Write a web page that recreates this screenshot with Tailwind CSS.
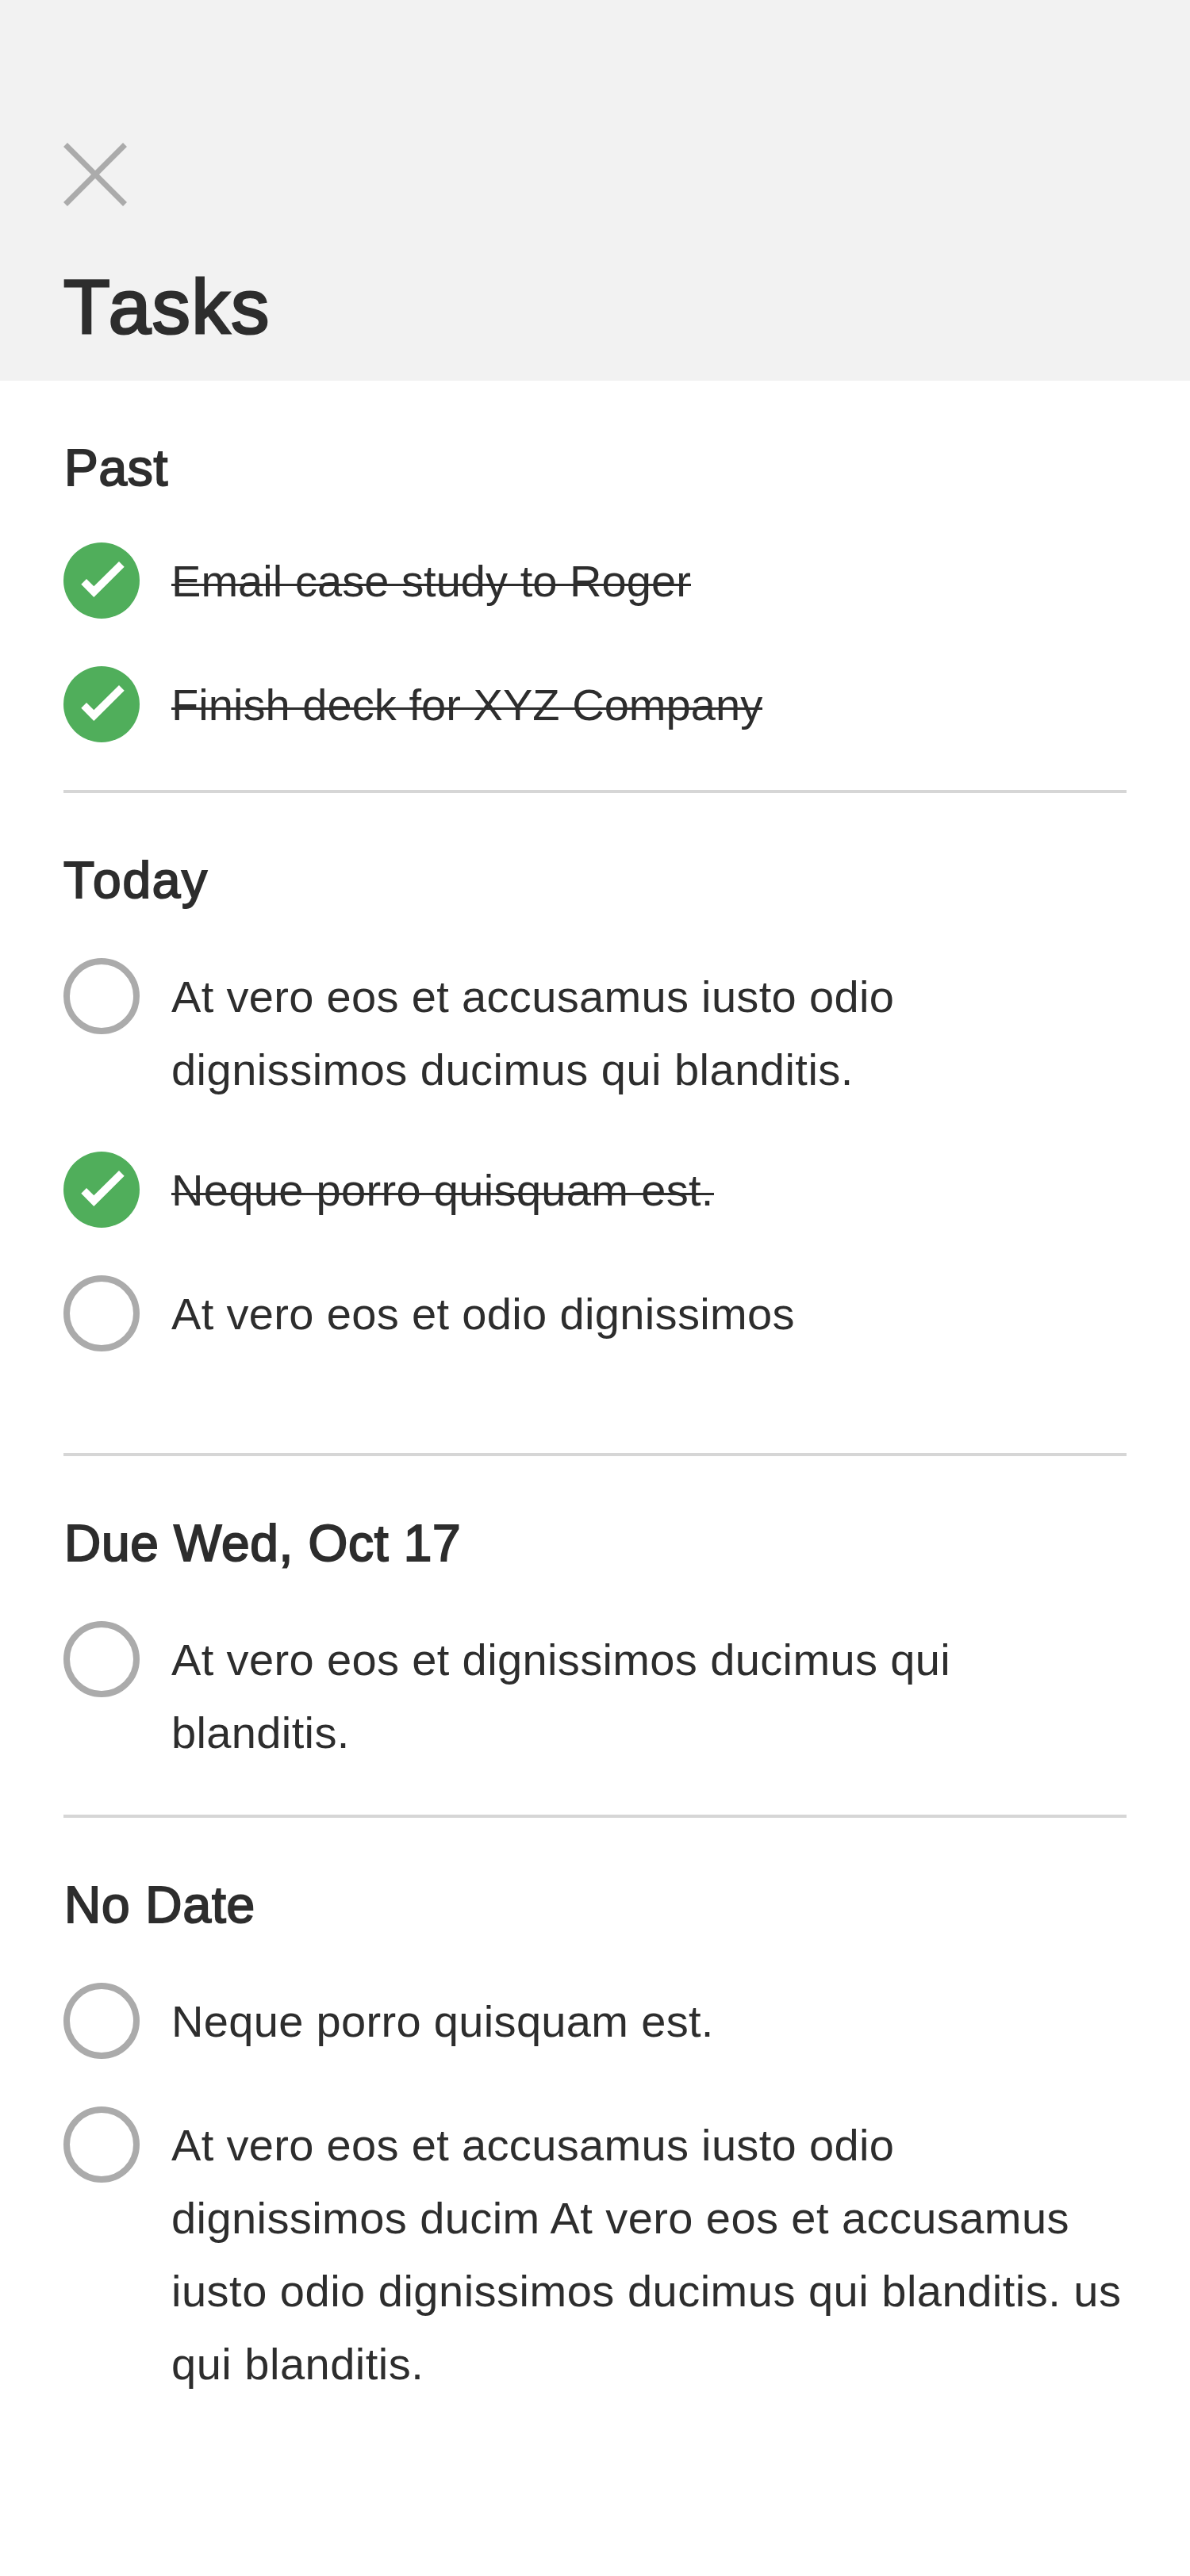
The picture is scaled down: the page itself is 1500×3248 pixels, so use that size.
<!DOCTYPE html>
<html lang="en">
<head>
<meta charset="utf-8">
<title>Tasks</title>
<script src="https://cdn.jsdelivr.net/npm/@tailwindcss/browser@4"></script>
</head>
<body class="bg-white font-['Liberation_Sans',Arial,sans-serif] text-[56px] leading-[92px] text-[#2d2d2d]">
<svg class="hidden">
  <symbol id="done" viewBox="0 0 96 96">
    <circle cx="48" cy="48" r="48" fill="#50ae5b"/>
    <path d="M22.3 52.7 29 46l9.3 9.3L70 24l6.7 6.7L38.3 69z" fill="#fff"/>
  </symbol>
  <symbol id="open" viewBox="0 0 96 96">
    <circle cx="48" cy="48" r="44" fill="none" stroke="#ababab" stroke-width="8"/>
  </symbol>
</svg>

<header class="h-[480px] bg-[#f2f2f2] px-20 pt-[180px]">
  <button class="block size-20" aria-label="Close">
    <svg class="size-20" viewBox="0 0 80 80" fill="none" stroke="#ababab" stroke-width="7"><path d="M2.5 2.5l75 75M77.5 2.5l-75 75"/></svg>
  </button>
  <h1 class="mt-[67px] text-[96px] leading-[120px] tracking-[1.7px] [-webkit-text-stroke:3px_#2d2d2d]"><span class="tracking-[-2px]">T</span>asks</h1>
</header>

<main class="px-20 pb-50">
  <section class="border-b-4 border-[#d6d6d6] pt-[70px] pb-[60px]">
    <h2 class="mb-[54px] pl-px text-[64px] leading-20 tracking-[0.7px] [-webkit-text-stroke:2px_#2d2d2d]">Past</h2>
    <ul class="flex flex-col gap-[60px]">
      <li class="flex min-h-24 gap-10">
        <svg class="size-24 shrink-0"><use href="#done"/></svg>
        <p class="relative mt-[3px] -mb-[3px] tracking-[0.05px] after:absolute after:inset-x-0 after:top-[49px] after:h-[3px] after:bg-[#2d2d2d]">Email case study to Roger</p>
      </li>
      <li class="flex min-h-24 gap-10">
        <svg class="size-24 shrink-0"><use href="#done"/></svg>
        <p class="relative mt-[3px] -mb-[3px] tracking-[0.05px] after:absolute after:inset-x-0 after:top-[49px] after:h-[3px] after:bg-[#2d2d2d]">Finish deck for XYZ Company</p>
      </li>
    </ul>
  </section>

  <section class="border-b-4 border-[#d6d6d6] pt-[70px] pb-[128px]">
    <h2 class="mb-[58px] text-[64px] leading-20 tracking-[1.7px] [-webkit-text-stroke:2px_#2d2d2d]"><span class="tracking-[-2px]">T</span>oday</h2>
    <ul class="flex flex-col gap-[60px]">
      <li class="flex min-h-24 gap-10">
        <svg class="size-24 shrink-0"><use href="#open"/></svg>
        <p class="mt-[3px] -mb-[3px] tracking-[0.33px]">At vero eos et accusamus iusto odio<br><span class="tracking-[0.48px]">dignissimos ducimus qui blanditis.</span></p>
      </li>
      <li class="flex min-h-24 gap-10">
        <svg class="size-24 shrink-0"><use href="#done"/></svg>
        <p class="relative mt-[3px] -mb-[3px] tracking-[0.33px] after:absolute after:inset-x-0 after:top-[49px] after:h-[3px] after:bg-[#2d2d2d]">Neque porro quisquam est.</p>
      </li>
      <li class="flex min-h-24 gap-10">
        <svg class="size-24 shrink-0"><use href="#open"/></svg>
        <p class="mt-[3px] -mb-[3px] tracking-[0.35px]">At vero eos et odio dignissimos</p>
      </li>
    </ul>
  </section>

  <section class="border-b-4 border-[#d6d6d6] pt-[70px] pb-[60px]">
    <h2 class="mb-[58px] pl-px text-[64px] leading-20 tracking-[0.7px] [-webkit-text-stroke:2px_#2d2d2d]">Due Wed, Oct 17</h2>
    <ul class="flex flex-col gap-[60px]">
      <li class="flex min-h-24 gap-10">
        <svg class="size-24 shrink-0"><use href="#open"/></svg>
        <p class="mt-[3px] -mb-[3px] tracking-[0.37px]">At vero eos et dignissimos ducimus qui<br>blanditis.</p>
      </li>
    </ul>
  </section>

  <section class="pt-[70px]">
    <h2 class="mb-[58px] pl-px text-[64px] leading-20 tracking-[0.9px] [-webkit-text-stroke:2px_#2d2d2d]">No Date</h2>
    <ul class="flex flex-col gap-[60px]">
      <li class="flex min-h-24 gap-10">
        <svg class="size-24 shrink-0"><use href="#open"/></svg>
        <p class="mt-[3px] -mb-[3px] tracking-[0.33px]">Neque porro quisquam est.</p>
      </li>
      <li class="flex min-h-24 gap-10">
        <svg class="size-24 shrink-0"><use href="#open"/></svg>
        <p class="mt-[3px] -mb-[3px] whitespace-nowrap tracking-[0.5px]"><span class="tracking-[0.33px]">At vero eos et accusamus iusto odio</span><br><span class="tracking-[0.42px]">dignissimos ducim At vero eos et accusamus</span><br>iusto odio dignissimos ducimus qui blanditis. us<br>qui blanditis.</p>
      </li>
    </ul>
  </section>
</main>
</body>
</html>
